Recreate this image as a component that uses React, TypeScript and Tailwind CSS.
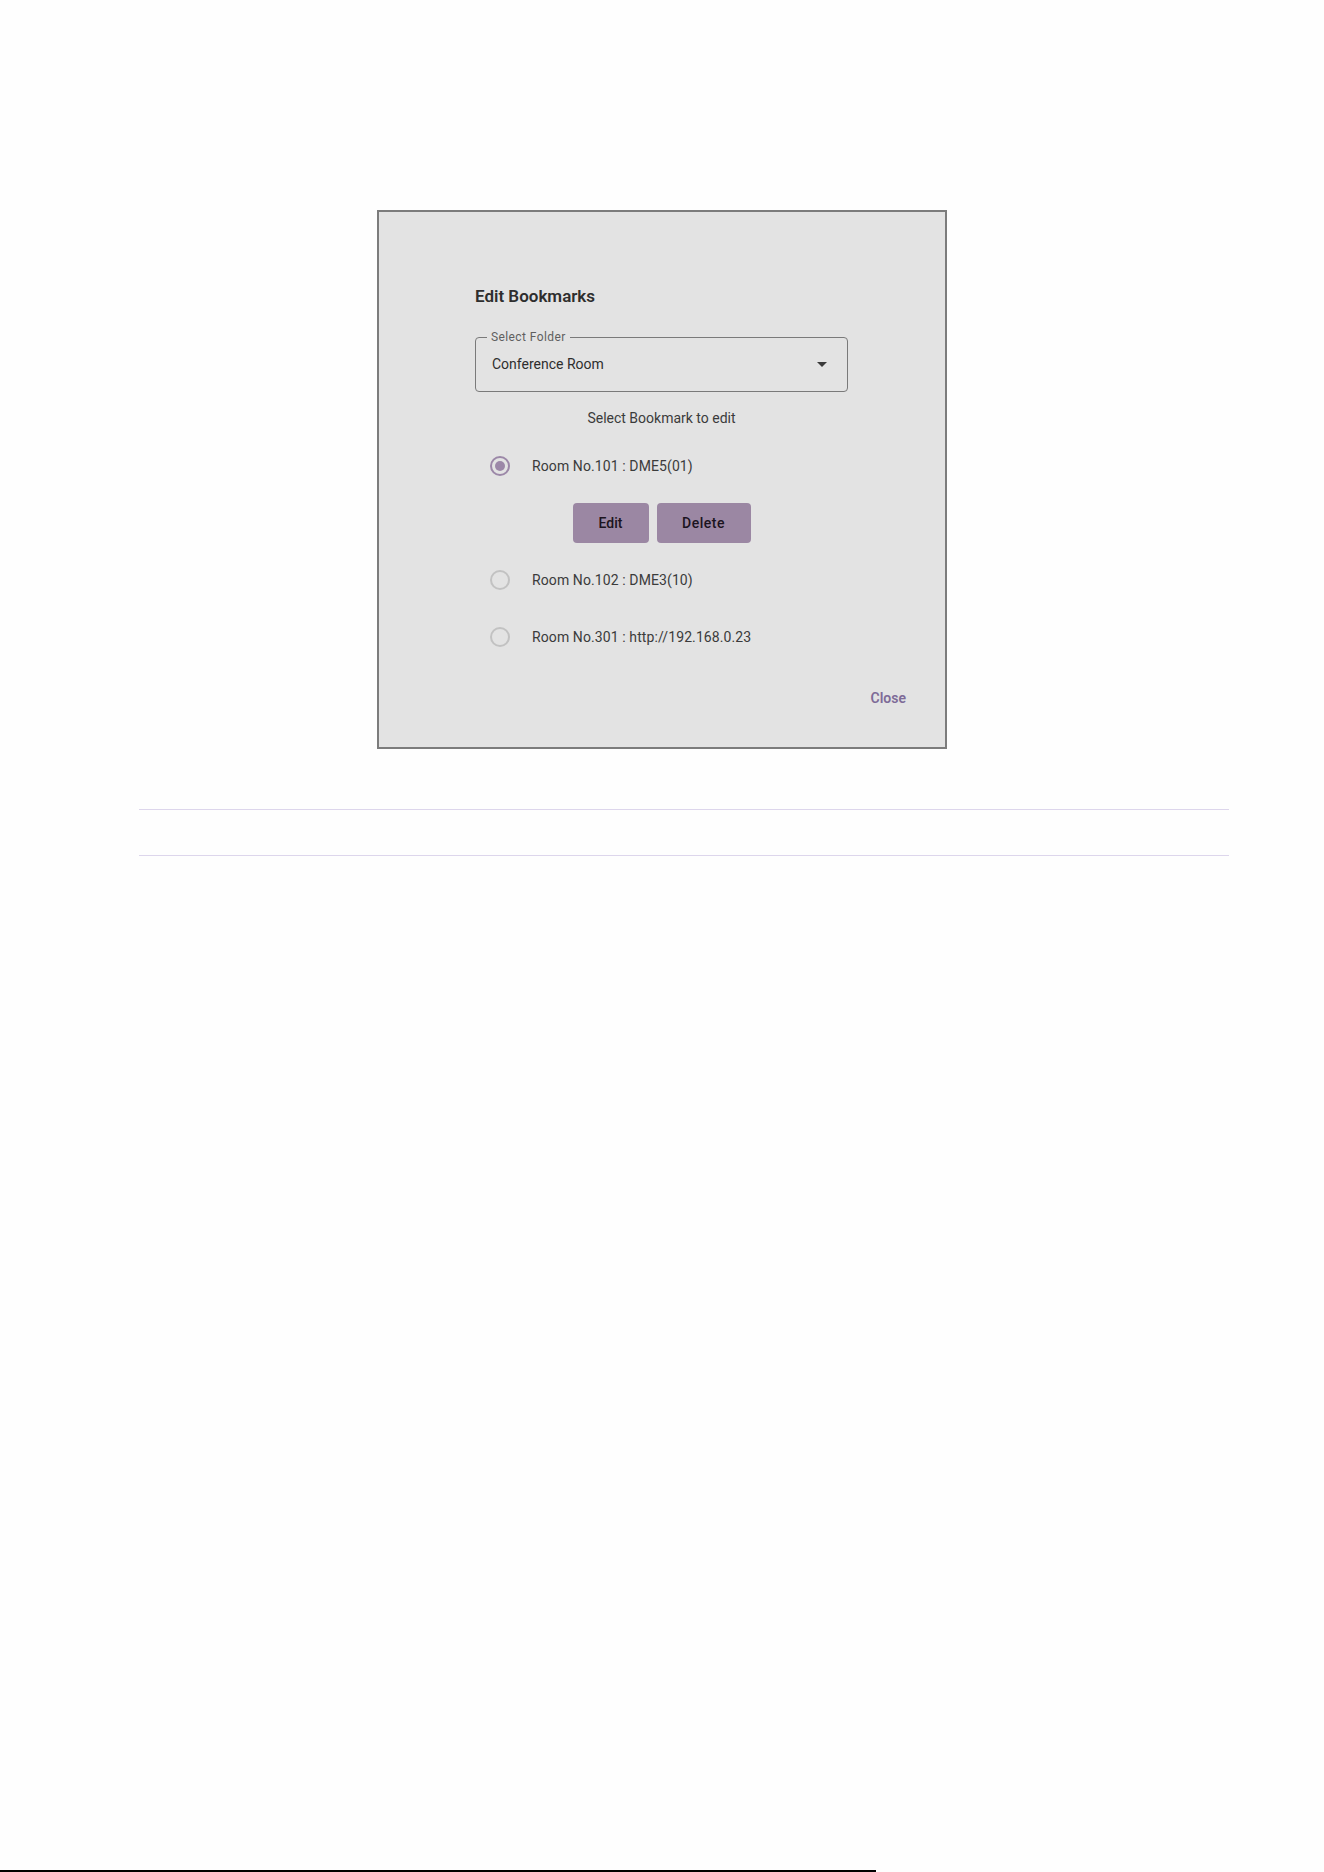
import React from "react";

type Bookmark = { id: string; label: string };

const bookmarks: Bookmark[] = [
  { id: "101", label: "Room No.101 : DME5(01)" },
  { id: "102", label: "Room No.102 : DME3(10)" },
  { id: "301", label: "Room No.301 : http://192.168.0.23" },
];

function Radio({ checked }: { checked: boolean }) {
  return checked ? (
    <span className="ml-[15px] flex h-[20px] w-[20px] shrink-0 items-center justify-center rounded-full border-2 border-[#9c88a8]">
      <span className="h-[10px] w-[10px] rounded-full bg-[#9c88a8]" />
    </span>
  ) : (
    <span className="ml-[15px] h-[20px] w-[20px] shrink-0 rounded-full border-2 border-[#c2c2c2]" />
  );
}

function BookmarkRow({ item, checked }: { item: Bookmark; checked: boolean }) {
  return (
    <div className="flex h-[40px] items-center gap-[22px]">
      <Radio checked={checked} />
      <span className="text-[14px] tracking-[0.1px] text-[#3b3b3b]">{item.label}</span>
    </div>
  );
}

export default function App() {
  const selected = "101";

  return (
    <div className="flex h-[1872px] flex-col bg-[#fefefe] font-['Roboto',sans-serif]">
      {/* dialog */}
      <div className="ml-[377px] mt-[210px] flex h-[539px] w-[570px] flex-col border-2 border-[#7c7c7c] bg-[#e3e3e3]">
        <div className="ml-[96px] w-[373px]">
          <h2 className="mt-[74px] text-[17px] font-semibold leading-[20px] text-[#2e2e2e]">
            Edit Bookmarks
          </h2>

          <div className="relative mt-[31px] flex h-[55px] items-center justify-between rounded-[4px] border border-[#7a7a7a] pl-[16px] pr-[20px]">
            <span className="absolute left-[11px] top-[-8px] bg-[#e3e3e3] px-[4px] text-[12px] leading-[14px] tracking-[0.4px] text-[#5f5f5f]">
              Select Folder
            </span>
            <span className="text-[14px] text-[#2e2e2e]">Conference Room</span>
            <svg width="10" height="5" viewBox="0 0 10 5">
              <path d="M0 0h10L5 5z" fill="#3a3a3a" />
            </svg>
          </div>

          <p className="mt-[16px] text-center text-[14px] leading-[20px] text-[#3b3b3b]">
            Select Bookmark to edit
          </p>

          <div className="mt-[18px]">
            <BookmarkRow item={bookmarks[0]} checked={selected === bookmarks[0].id} />
          </div>

          <div className="mt-[17px] flex justify-center gap-[8px]">
            <button className="h-[40px] w-[76px] rounded-[4px] bg-[#9b87a3] text-[14px] font-medium text-[#1c1420]">
              Edit
            </button>
            <button className="h-[40px] w-[94px] rounded-[4px] bg-[#9b87a3] text-[14px] font-medium tracking-[0.5px] text-[#1c1420]">
              Delete
            </button>
          </div>

          <div className="mt-[17px]">
            <BookmarkRow item={bookmarks[1]} checked={selected === bookmarks[1].id} />
          </div>
          <div className="mt-[17px]">
            <BookmarkRow item={bookmarks[2]} checked={selected === bookmarks[2].id} />
          </div>
        </div>

        <div className="mt-[31px] flex justify-end pr-[39px]">
          <button className="text-[14px] font-semibold leading-[20px] text-[#7e6b98]">Close</button>
        </div>
      </div>

      {/* divider lines */}
      <div className="ml-[139px] mt-[60px] h-px w-[1090px] bg-[#ddd6ec]" />
      <div className="ml-[139px] mt-[45px] h-px w-[1090px] bg-[#ddd6ec]" />

      <div className="mt-auto h-[2px] w-[876px] bg-black" />
    </div>
  );
}
